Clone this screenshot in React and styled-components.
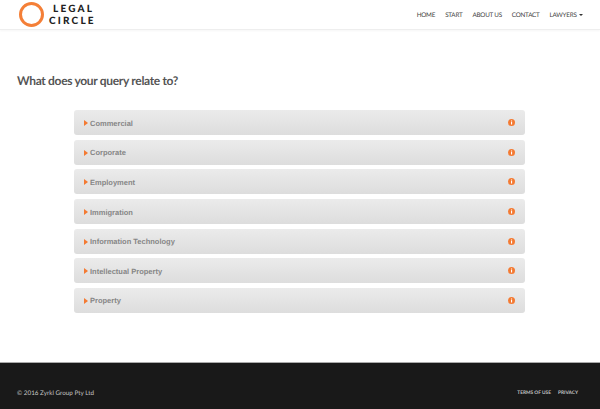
import React from 'react';
import styled, { createGlobalStyle } from 'styled-components';

const GlobalStyle = createGlobalStyle`
  html, body {
    margin: 0;
    padding: 0;
    background: #fff;
    font-family: "Lato", sans-serif;
    text-rendering: geometricPrecision;
  }
`;

const topics = [
  'Commercial',
  'Corporate',
  'Employment',
  'Immigration',
  'Information Technology',
  'Intellectual Property',
  'Property',
];

const navItems = ['HOME', 'START', 'ABOUT US', 'CONTACT'];

const App = () => (
  <Page>
    <GlobalStyle />
    <Header>
      <Logo>
        <LogoRing />
        <LogoText>
          <LogoLine $indent={4}>LEGAL</LogoLine>
          <LogoLine>CIRCLE</LogoLine>
        </LogoText>
      </Logo>
      <Nav>
        {navItems.map((item) => (
          <NavLink key={item}>{item}</NavLink>
        ))}
        <NavLink>
          LAWYERS <Caret />
        </NavLink>
      </Nav>
    </Header>
    <Main>
      <Title>What does your query relate to?</Title>
      <List>
        {topics.map((topic) => (
          <Row key={topic}>
            <RowLabel>
              <Arrow />
              {topic}
            </RowLabel>
            <InfoIcon viewBox="0 0 14 14">
              <circle cx="7" cy="7" r="7" fill="#f47a32" />
              <rect x="6" y="6" width="2.2" height="5" fill="#fff" />
              <rect x="6" y="3" width="2.2" height="2" fill="#fff" />
            </InfoIcon>
          </Row>
        ))}
      </List>
    </Main>
    <Footer>
      <Copyright>© 2016 Zyrkl Group Pty Ltd</Copyright>
      <FooterLinks>
        <FooterLink>TERMS OF USE</FooterLink>
        <FooterLink>PRIVACY</FooterLink>
      </FooterLinks>
    </Footer>
  </Page>
);

export default App;

const Page = styled.div`
  width: 600px;
  height: 409px;
  display: flex;
  flex-direction: column;
  overflow: hidden;
`;

const Header = styled.header`
  height: 29px;
  flex: none;
  display: flex;
  align-items: center;
  justify-content: space-between;
  padding: 0 17px 0 19px;
  border-bottom: 1px solid #eeeeee;
  box-shadow: 0 1px 2px rgba(0, 0, 0, 0.04);
`;

const Logo = styled.div`
  display: flex;
  align-items: center;
  gap: 5px;
`;

const LogoRing = styled.div`
  width: 25px;
  height: 25px;
  box-sizing: border-box;
  border: 3px solid #f47f37;
  border-radius: 50%;
`;

const LogoText = styled.div`
  display: flex;
  flex-direction: column;
  padding-top: 1px;
`;

const LogoLine = styled.span`
  font-weight: 900;
  font-size: 10px;
  line-height: 12px;
  letter-spacing: 2.2px;
  color: #222;
  padding-left: ${(props) => props.$indent || 0}px;
`;

const Nav = styled.nav`
  display: flex;
  align-items: center;
  gap: 10px;
  padding-top: 2px;
`;

const NavLink = styled.a`
  font-size: 6.3px;
  letter-spacing: -0.23px;
  color: #444;
  white-space: nowrap;
`;

const Caret = styled.span`
  display: inline-block;
  margin-left: 1px;
  vertical-align: middle;
  border-top: 2.5px solid #333;
  border-left: 2.5px solid transparent;
  border-right: 2.5px solid transparent;
`;

const Main = styled.main`
  flex: 1;
  padding: 42px 17px 0;
`;

const Title = styled.h1`
  margin: 0 0 21.3px;
  font-size: 12px;
  line-height: 17px;
  letter-spacing: -0.32px;
  font-weight: 700;
  color: #555;
`;

const List = styled.div`
  display: flex;
  flex-direction: column;
  gap: 4.6px;
  width: 450.5px;
  margin-left: 57px;
`;

const Row = styled.div`
  height: 25px;
  box-sizing: border-box;
  display: flex;
  align-items: center;
  justify-content: space-between;
  padding: 0 10px;
  border-radius: 3px;
  background: linear-gradient(to bottom, #ebebeb, #dddddd);
`;

const RowLabel = styled.div`
  display: flex;
  align-items: center;
  padding-top: 1px;
  font-family: "Liberation Sans", sans-serif;
  font-weight: 700;
  font-size: 7.5px;
  color: #868686;
`;

const Arrow = styled.span`
  width: 0;
  height: 0;
  margin-right: 2px;
  border-left: 4px solid #f47a32;
  border-top: 3.5px solid transparent;
  border-bottom: 3.5px solid transparent;
`;

const InfoIcon = styled.svg`
  width: 7px;
  height: 7px;
`;

const Footer = styled.footer`
  height: 47px;
  flex: none;
  display: flex;
  align-items: center;
  justify-content: space-between;
  padding: 14px 22px 0 17px;
  box-sizing: border-box;
  background: #191919;
  border-top: 1px solid #aaa;
`;

const Copyright = styled.span`
  font-size: 6.3px;
  color: #c4c4c4;
`;

const FooterLinks = styled.div`
  display: flex;
  gap: 7px;
`;

const FooterLink = styled.a`
  font-size: 4.8px;
  font-weight: 700;
  color: #c4c4c4;
`;
